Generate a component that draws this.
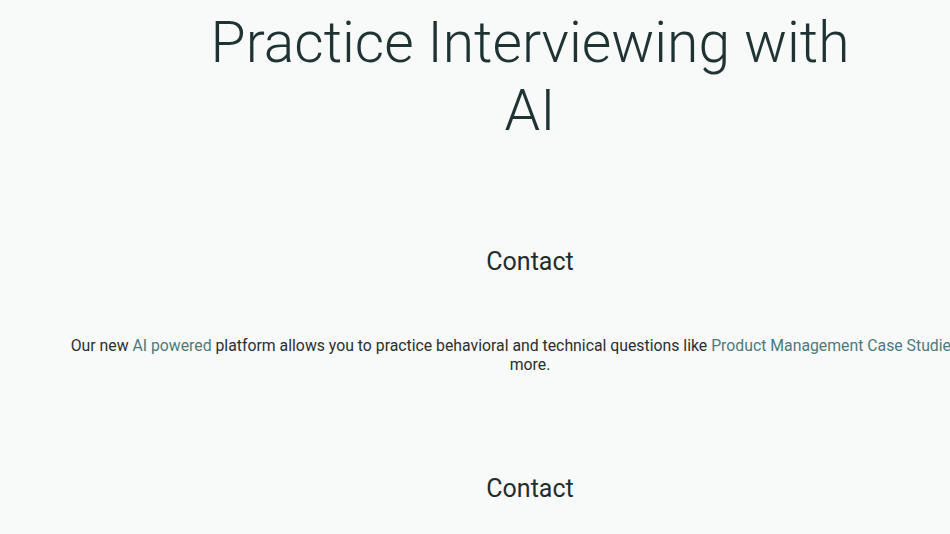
import React from 'react'

export default function App() {
    return (
        <div className="min-h-screen overflow-hidden bg-[#f8f9f9] text-[#263333]" style={{ fontFamily: 'Roboto, "Noto Sans", sans-serif' }}>
            <div className="w-[1060px] text-center">
                {/* hero title */}
                <h1 className="mx-auto mt-[9px] max-w-[680px] text-[57px] font-light leading-[68px] text-[#1f3333]">
                    Practice Interviewing with AI
                </h1>

                <div className="mt-[101px]">
                    <h2 className="text-[25px] font-normal leading-8 text-[#1f2d2d]">Contact</h2>
                </div>

                <p className="mx-auto mt-[58px] w-[940px] text-[15.8px] leading-[19px] text-[#2a2f2f]">
                    Our new <a className="text-[#4d7b7c]">AI powered</a> platform allows you to practice behavioral and technical questions like{' '}
                    <a className="text-[#4d7b7c]">Product Management Case Studies</a> and
                    <br />
                    more.
                </p>

                <div className="mt-[99px]">
                    <h2 className="text-[25px] font-normal leading-8 text-[#1f2d2d]">Contact</h2>
                </div>
            </div>
        </div>
    )
}
